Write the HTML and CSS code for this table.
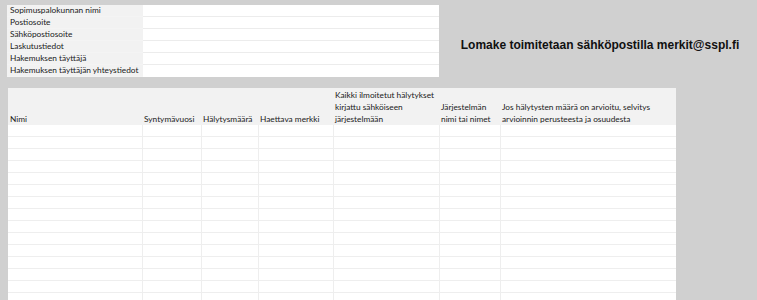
FILE: index.html
```html
<!DOCTYPE html>
<html lang="fi">
<head>
<meta charset="utf-8">
<title>Lomake</title>
<link rel="stylesheet" href="styles.css">
</head>
<body>
<div class="top">
  <div class="info">
    <div class="lbl">Sopimuspalokunnan nimi</div><div class="val"></div>
    <div class="lbl">Postiosoite</div><div class="val"></div>
    <div class="lbl">Sähköpostiosoite</div><div class="val"></div>
    <div class="lbl">Laskutustiedot</div><div class="val"></div>
    <div class="lbl">Hakemuksen täyttäjä</div><div class="val"></div>
    <div class="lbl">Hakemuksen täyttäjän yhteystiedot</div><div class="val"></div>
  </div>
  <div class="notice">Lomake toimitetaan sähköpostilla merkit@sspl.fi</div>
</div>
<div class="grid">
  <div class="hd">Nimi</div>
  <div class="hd">Syntymävuosi</div>
  <div class="hd">Hälytysmäärä</div>
  <div class="hd">Haettava merkki</div>
  <div class="hd">Kaikki ilmoitetut hälytykset kirjattu sähköiseen järjestelmään</div>
  <div class="hd">Järjestelmän nimi tai nimet</div>
  <div class="hd">Jos hälytysten määrä on arvioitu, selvitys arvioinnin perusteesta ja osuudesta</div>
  <div class="c"></div><div class="c"></div><div class="c"></div><div class="c"></div><div class="c"></div><div class="c"></div><div class="c"></div>
  <div class="c"></div><div class="c"></div><div class="c"></div><div class="c"></div><div class="c"></div><div class="c"></div><div class="c"></div>
  <div class="c"></div><div class="c"></div><div class="c"></div><div class="c"></div><div class="c"></div><div class="c"></div><div class="c"></div>
  <div class="c"></div><div class="c"></div><div class="c"></div><div class="c"></div><div class="c"></div><div class="c"></div><div class="c"></div>
  <div class="c"></div><div class="c"></div><div class="c"></div><div class="c"></div><div class="c"></div><div class="c"></div><div class="c"></div>
  <div class="c"></div><div class="c"></div><div class="c"></div><div class="c"></div><div class="c"></div><div class="c"></div><div class="c"></div>
  <div class="c"></div><div class="c"></div><div class="c"></div><div class="c"></div><div class="c"></div><div class="c"></div><div class="c"></div>
  <div class="c"></div><div class="c"></div><div class="c"></div><div class="c"></div><div class="c"></div><div class="c"></div><div class="c"></div>
  <div class="c"></div><div class="c"></div><div class="c"></div><div class="c"></div><div class="c"></div><div class="c"></div><div class="c"></div>
  <div class="c"></div><div class="c"></div><div class="c"></div><div class="c"></div><div class="c"></div><div class="c"></div><div class="c"></div>
  <div class="c"></div><div class="c"></div><div class="c"></div><div class="c"></div><div class="c"></div><div class="c"></div><div class="c"></div>
  <div class="c"></div><div class="c"></div><div class="c"></div><div class="c"></div><div class="c"></div><div class="c"></div><div class="c"></div>
  <div class="c"></div><div class="c"></div><div class="c"></div><div class="c"></div><div class="c"></div><div class="c"></div><div class="c"></div>
  <div class="c"></div><div class="c"></div><div class="c"></div><div class="c"></div><div class="c"></div><div class="c"></div><div class="c"></div>
  <div class="c"></div><div class="c"></div><div class="c"></div><div class="c"></div><div class="c"></div><div class="c"></div><div class="c"></div>
</div>
</body>
</html>
```
FILE: styles.css
```css
html, body {
  margin: 0;
  padding: 0;
  background: #d0d0d0;
  height: 300px;
  overflow: hidden;
}
body {
  font-family: "Lato", "Liberation Sans", sans-serif;
  font-size: 8.3px;
  color: #1a1a1a;
}
.top {
  display: flex;
  align-items: flex-start;
  padding: 5px 0 0 7px;
}
.info {
  display: grid;
  grid-template-columns: 136px 296px;
  grid-auto-rows: 12px;
  background: #fff;
}
.lbl, .val {
  box-sizing: border-box;
  line-height: 11px;
  white-space: nowrap;
  overflow: hidden;
}
.lbl {
  background: #f2f2f2;
  padding-left: 3px;
  border-bottom: 1px solid #f4f4f4;
}
.val {
  border-bottom: 1px solid #ececec;
}
.val:last-child { border-bottom: none; }
.notice {
  flex: 1;
  text-align: center;
  font-family: "Liberation Sans", sans-serif;
  font-weight: bold;
  font-size: 12px;
  margin-top: 33px;
  padding-left: 4px;
  color: #111;
}
.grid {
  display: grid;
  grid-template-columns: 134px 59px 57px 75px 106px 61px 176px;
  grid-template-rows: 37px;
  grid-auto-rows: 12px;
  width: 668px;
  margin: 11px 0 0 8px;
  background: #fff;
}
.hd {
  background: #f2f2f2;
  padding: 0 2px;
  display: flex;
  align-items: flex-end;
  line-height: 12px;
}
.c {
  box-sizing: border-box;
  border-left: 1px solid #eeeeee;
  border-bottom: 1px solid #eeeeee;
}
.c:nth-child(7n+1) {
  border-left: none;
}
```
